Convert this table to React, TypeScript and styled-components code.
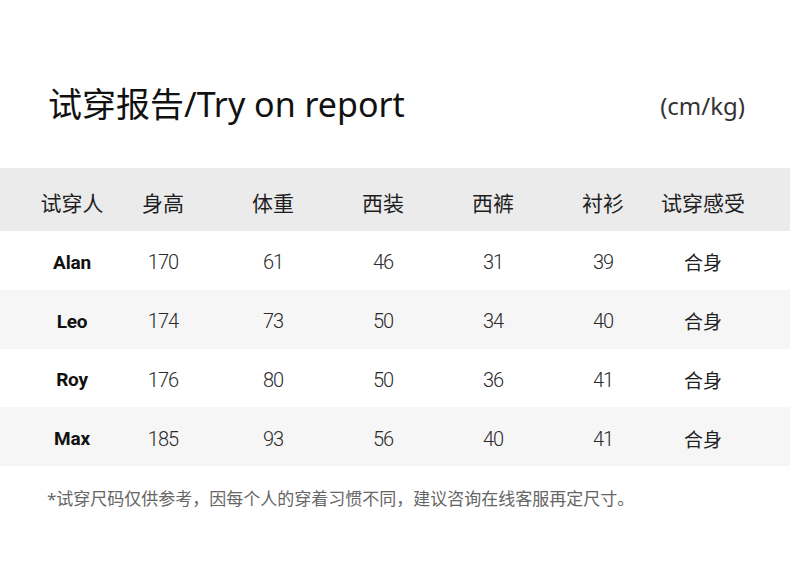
import styled, { createGlobalStyle } from "styled-components"

const GlobalStyle = createGlobalStyle`
    html, body {
        margin: 0;
        padding: 0;
        background: #ffffff;
    }
`

const columns = ["试穿人", "身高", "体重", "西装", "西裤", "衬衫", "试穿感受"]

const rows = [
    { name: "Alan", values: ["170", "61", "46", "31", "39"], fit: "合身" },
    { name: "Leo", values: ["174", "73", "50", "34", "40"], fit: "合身" },
    { name: "Roy", values: ["176", "80", "50", "36", "41"], fit: "合身" },
    { name: "Max", values: ["185", "93", "56", "40", "41"], fit: "合身" },
]

export default function App() {
    return (
        <Page>
            <GlobalStyle />
            <TitleBar>
                <Title>试穿报告/Try on report</Title>
                <Unit>(cm/kg)</Unit>
            </TitleBar>

            <Table>
                <HeaderRow>
                    {columns.map((c) => (
                        <Cell key={c}>{c}</Cell>
                    ))}
                </HeaderRow>
                {rows.map((r, i) => (
                    <BodyRow key={r.name} $striped={i % 2 === 1}>
                        <NameCell>{r.name}</NameCell>
                        {r.values.map((v, j) => (
                            <NumCell key={j}>{v}</NumCell>
                        ))}
                        <FitCell>{r.fit}</FitCell>
                    </BodyRow>
                ))}
            </Table>

            <Note>*试穿尺码仅供参考，因每个人的穿着习惯不同，建议咨询在线客服再定尺寸。</Note>
        </Page>
    )
}

const Page = styled.div`
    width: 790px;
    height: 573px;
    background: #ffffff;
    overflow: hidden;
    font-family: "Noto Sans", "Noto Sans CJK SC", sans-serif;
`

const TitleBar = styled.div`
    display: flex;
    align-items: flex-end;
    justify-content: space-between;
    padding: 82px 45px 0 48px;
    height: 44px;
`

const Title = styled.h1`
    margin: 0;
    font-size: 34px;
    line-height: 44px;
    font-weight: 400;
    color: #111111;
`

const Unit = styled.span`
    font-size: 24px;
    line-height: 40px;
    color: #333333;
`

const Table = styled.div`
    margin-top: 42px;
`

const Row = styled.div`
    display: grid;
    grid-template-columns: 72px 110px 110px 110px 110px 110px 90px;
    padding-left: 36px;
`

const HeaderRow = styled(Row)`
    height: 63px;
    background: #ebebeb;
    color: #1e1e1e;
    font-size: 21px;
`

const BodyRow = styled(Row)<{ $striped: boolean }>`
    height: 58.75px;
    background: ${(p) => (p.$striped ? "#f6f6f6" : "#ffffff")};
`

const Cell = styled.div`
    display: flex;
    align-items: center;
    justify-content: center;
    white-space: nowrap;
    padding-top: 4px;
`

const NameCell = styled(Cell)`
    font-family: Roboto, "Liberation Sans", sans-serif;
    font-weight: 700;
    font-size: 19px;
    color: #111111;
    letter-spacing: -0.2px;
`

const NumCell = styled(Cell)`
    font-family: Roboto, "Liberation Sans", sans-serif;
    font-weight: 300;
    font-size: 20px;
    letter-spacing: -1px;
    color: #2a2a2a;
`

const FitCell = styled(Cell)`
    font-size: 19px;
    color: #222222;
`

const Note = styled.p`
    margin: 21px 0 0 47px;
    font-size: 17px;
    line-height: 24px;
    color: #666666;
`
